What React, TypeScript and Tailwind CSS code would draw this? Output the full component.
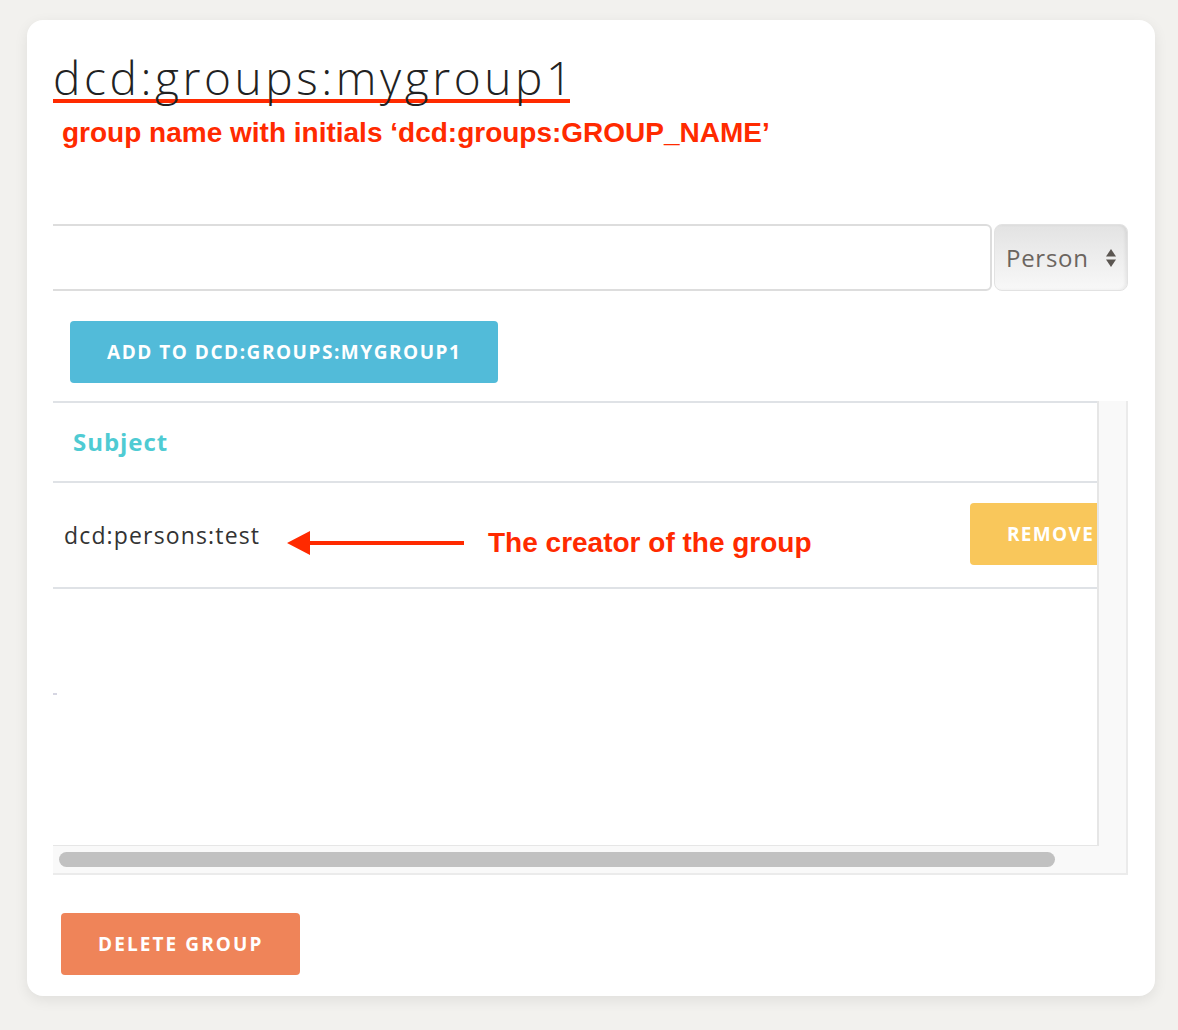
import * as React from "react";

const sans = "font-['Open_Sans',sans-serif]";
const arial = "font-['Liberation_Sans',Arial,sans-serif]";

function ActionButton({ label, className }: { label: string; className?: string }) {
  return (
    <button
      type="button"
      className={`${sans} h-[62px] shrink-0 self-start whitespace-nowrap rounded-[4px] px-[37px] text-left text-[19px] font-bold uppercase text-white ${className ?? ""}`}
    >
      {label}
    </button>
  );
}

function SortArrows() {
  return (
    <svg width="12" height="20" viewBox="0 0 12 20" className="shrink-0">
      <path d="M6 1 L11 8.5 L1 8.5 Z" fill="#5b5651" />
      <path d="M6 19 L11 11.5 L1 11.5 Z" fill="#5b5651" />
    </svg>
  );
}

export default function App() {
  return (
    <div className="h-[1030px] w-full bg-[#f2f1ee] pl-[27px] pt-5">
      <div className="flex h-[976px] w-[1128px] flex-col rounded-2xl bg-white pt-[34px] shadow-[0_4px_14px_rgba(0,0,0,0.08)]">
        {/* group name + annotation */}
        <div className="pl-[26px]">
          <h1 className={`${sans} text-[46px] font-light leading-none tracking-[0.078em] text-[#222]`}>
            dcd:groups:mygroup1
          </h1>
          <div className="mt-[-1px] h-[4px] w-[517px] bg-[#ff2a00]" />
          <p className={`${arial} mt-[16px] pl-[9px] text-[28px] font-bold leading-none text-[#ff2a00]`}>
            group name with initials ‘dcd:groups:GROUP_NAME’
          </p>
        </div>

        <div className="ml-[26px] mt-[77px] flex w-[1075px] flex-col overflow-hidden">
          {/* search + type */}
          <div className="flex h-[67px] gap-[2px]">
            <input
              type="text"
              className="-ml-5 h-full flex-1 rounded-r-md border-2 border-[#dddddd] bg-white outline-none"
            />
            <div className="flex h-full w-[134px] items-center justify-between rounded-lg border border-[#e2e2e2] bg-gradient-to-b from-[#e3e3e3] to-[#f8f8f8] pl-[11px] pr-[10px] shadow-[inset_-2px_0_3px_rgba(0,0,0,0.06)]">
              <span className={`${sans} text-[24px] tracking-[0.03em] text-[#6b655f]`}>Person</span>
              <SortArrows />
            </div>
          </div>

          <ActionButton
            label="Add to dcd:groups:mygroup1"
            className="ml-[17px] mt-[30px] bg-[#52bbd9] tracking-[0.08em]"
          />

          {/* members table */}
          <div className="mt-[18px] flex h-[474px] flex-col border-b-2 border-r-2 border-[#ebebeb] bg-[#f9f9f9]">
            <div className="flex flex-1">
              <div className="relative flex-1 overflow-hidden border-b border-r-2 border-[#e6e6e6] bg-white">
                <div className="flex h-[82px] items-center border-y-2 border-[#dfe2e6] pl-5">
                  <span className={`${sans} text-[24px] font-bold tracking-[0.04em] text-[#4fcbd3]`}>Subject</span>
                </div>
                <div className="relative flex h-[106px] items-center border-b-2 border-[#dfe2e6] pl-[11px]">
                  <span className={`${sans} text-[23px] tracking-[0.05em] text-[#333]`}>dcd:persons:test</span>
                  <div className="absolute left-[234px] top-[46px] flex items-center gap-[24px]">
                    <svg width="177" height="26" viewBox="0 0 177 26">
                      <path d="M0 13 L23 1 L23 11 L177 11 L177 15 L23 15 L23 25 Z" fill="#ff2a00" />
                    </svg>
                    <span className={`${arial} text-[28px] font-bold leading-none text-[#ff2a00]`}>
                      The creator of the group
                    </span>
                  </div>
                  <ActionButton
                    label="Remove"
                    className="absolute left-[917px] top-[20px] bg-[#f9c75b] tracking-[0.07em]"
                  />
                </div>
                <div className="mt-[104px] h-[2px] w-[4px] bg-[#d6d6e2]" />
              </div>
              <div className="w-[27px]" />
            </div>
            {/* horizontal scrollbar */}
            <div className="flex h-[27px] items-center pl-[6px]">
              <div className="h-[15px] w-[996px] rounded-full bg-[#c1c1c1]" />
            </div>
          </div>
        </div>

        <ActionButton
          label="Delete group"
          className="ml-[34px] mt-[38px] bg-[#ef8459] tracking-[0.11em]"
        />
      </div>
    </div>
  );
}
